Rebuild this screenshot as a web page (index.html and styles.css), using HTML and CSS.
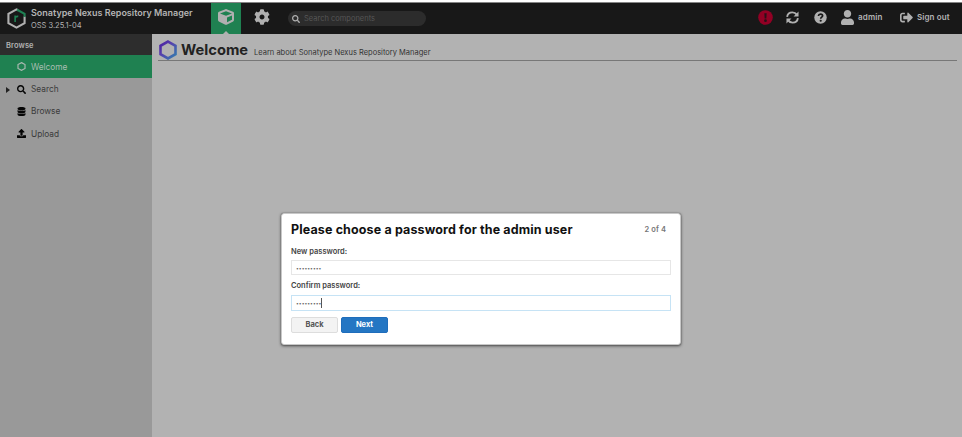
FILE: index.html
```html
<!DOCTYPE html>
<html lang="en">
<head>
<meta charset="utf-8">
<title>Sonatype Nexus Repository Manager</title>
<link rel="stylesheet" href="styles.css">
</head>
<body>
<header class="topbar">
  <div class="brand">
    <svg class="brand-logo" viewBox="0 0 18 20">
      <g fill="none" stroke-width="2">
        <path d="M10.500 2.100L9 1.300 1.300 5.600v8.800L9 18.700l7.700-4.300V8.200" stroke="#b0b0b0"/>
        <path d="M9.600 1.700l7.100 3.900v2.800" stroke="#1f8153"/>
        <path d="M7.700 13.400V7.200M7.700 10c.2-1.500 1.200-2.200 3-2" stroke="#1f8153" stroke-width="1.500"/>
      </g>
    </svg>
    <div class="brand-text">
      <div class="brand-name">Sonatype Nexus Repository Manager</div>
      <div class="brand-version">OSS 3.25.1-04</div>
    </div>
  </div>
  <div class="mode mode-active">
    <svg class="icon-cube" viewBox="0 0 512 512"><path d="M239.1 6.3l-208 78c-18.700 7-31.100 25-31.100 45v225.100c0 18.200 10.300 34.800 26.500 42.900l208 104c13.500 6.800 29.400 6.800 42.900 0l208-104c16.300-8.100 26.500-24.800 26.500-42.900V129.300c0-20-12.400-37.900-31.100-44.900l-208-78C262 2.200 250 2.200 239.100 6.300zM256 68.400l192 72v1.100l-192 78-192-78v-1.100l192-72zm32 356V275.500l160-65v133.900l-160 80z"/></svg>
  </div>
  <div class="mode mode-admin">
    <svg class="icon-cog" viewBox="0 0 512 512"><path d="M487.4 315.7l-42.6-24.6c4.3-23.2 4.3-47 0-70.2l42.6-24.6c4.9-2.8 7.1-8.6 5.5-14-11.1-35.6-30-67.8-54.7-94.6-3.8-4.1-10-5.1-14.8-2.3L380.8 110c-17.9-15.4-38.5-27.3-60.8-35.1V25.8c0-5.6-3.9-10.5-9.4-11.7-36.7-8.2-74.3-7.8-109.2 0-5.5 1.2-9.4 6.1-9.4 11.7V75c-22.2 7.9-42.8 19.8-60.8 35.1L88.7 85.5c-4.9-2.8-11-1.9-14.8 2.3-24.7 26.7-43.6 58.9-54.7 94.6-1.7 5.4.6 11.2 5.5 14L67.3 221c-4.3 23.2-4.3 47 0 70.2l-42.6 24.6c-4.9 2.8-7.1 8.6-5.5 14 11.1 35.6 30 67.8 54.7 94.6 3.8 4.1 10 5.1 14.8 2.3l42.6-24.6c17.9 15.4 38.5 27.3 60.8 35.1v49.2c0 5.6 3.9 10.5 9.4 11.7 36.7 8.2 74.3 7.8 109.2 0 5.5-1.2 9.4-6.1 9.4-11.7v-49.2c22.2-7.9 42.8-19.8 60.8-35.1l42.6 24.6c4.9 2.8 11 1.9 14.8-2.3 24.7-26.7 43.6-58.9 54.7-94.6 1.5-5.5-.7-11.3-5.6-14.1zM256 336c-44.100 0-80-35.900-80-80s35.900-80 80-80 80 35.900 80 80-35.900 80-80 80z"/></svg>
  </div>
  <div class="quick-search">
    <svg class="icon-find" viewBox="0 0 512 512"><path d="M505 442.7L405.3 343c-4.5-4.5-10.6-7-17-7H372c27.600-35.300 44-79.700 44-128C416 93.100 322.900 0 208 0S0 93.100 0 208s93.100 208 208 208c48.300 0 92.700-16.400 128-44v16.300c0 6.400 2.500 12.500 7 17l99.700 99.700c9.400 9.400 24.600 9.400 33.900 0l28.300-28.300c9.400-9.400 9.400-24.600.1-34zM208 336c-70.700 0-128-57.200-128-128 0-70.700 57.200-128 128-128 70.700 0 128 57.200 128 128 0 70.700-57.200 128-128 128z"/></svg>
    <span>Search components</span>
  </div>
  <div class="actions">
    <svg class="icon-alert" viewBox="0 0 14 14"><circle cx="7" cy="7" r="6.800"/><path d="M5.900 3h2.200l-.3 4.900H6.200z" fill="#2a1018"/><circle cx="7" cy="10" r="1.300" fill="#2a1018"/></svg>
    <svg class="icon-refresh" viewBox="0 0 14 14"><path d="M1.200 6.300C1.600 3.300 4 1.500 6.900 1.500c2 0 3.700.9 4.700 2.400M12.800 7.700c-.4 3-2.800 4.800-5.700 4.800-2 0-3.700-.9-4.700-2.400" fill="none" stroke="#b0b0b0" stroke-width="2"/><path d="M13.500.5v5.400H8.100zM.5 13.500V8.100h5.400z"/></svg>
    <svg class="icon-help" viewBox="0 0 14 14"><circle cx="7" cy="7" r="6.700"/><path d="M4.700 5.400C4.900 3.900 5.900 3.400 7 3.400c1.200 0 2.300.7 2.300 1.800C9.300 6.600 7.200 6.600 7.200 8.300" fill="none" stroke="#181818" stroke-width="1.800"/><circle cx="7.200" cy="10.500" r="1.200" fill="#181818"/></svg>
    <svg class="icon-user" viewBox="0 0 448 512"><path d="M224 256c70.700 0 128-57.300 128-128S294.700 0 224 0 96 57.300 96 128s57.300 128 128 128zm89.600 32h-16.700c-22.200 10.200-46.900 16-72.900 16s-50.600-5.800-72.900-16h-16.700C60.200 288 0 348.200 0 422.400V464c0 26.500 21.500 48 48 48h352c26.500 0 48-21.500 48-48v-41.600c0-74.200-60.200-134.400-134.400-134.400z"/></svg>
    <span class="user-name">admin</span>
    <svg class="icon-signout" viewBox="0 0 512 512"><path d="M497 273L329 441c-15 15-41 4.500-41-17v-96H152c-13.300 0-24-10.700-24-24v-96c0-13.300 10.700-24 24-24h136V88c0-21.400 25.900-32 41-17l168 168c9.300 9.400 9.300 24.600 0 34zM192 436v-40c0-6.600-5.400-12-12-12H96c-17.700 0-32-14.300-32-32V160c0-17.700 14.300-32 32-32h84c6.600 0 12-5.400 12-12V76c0-6.600-5.400-12-12-12H96c-53 0-96 43-96 96v192c0 53 43 96 96 96h84c6.600 0 12-5.400 12-12z"/></svg>
    <span class="sign-out">Sign out</span>
  </div>
</header>
<div class="workspace">
  <nav class="sidebar">
    <div class="sidebar-title">Browse</div>
    <div class="nav-item nav-selected">
      <svg viewBox="0 0 10 10"><path d="M5 .7l3.900 2.150v4.300L5 9.300 1.100 7.150v-4.300z" fill="none" stroke="#a9b8b0" stroke-width="1.300"/></svg>
      <span>Welcome</span>
    </div>
    <div class="nav-item nav-parent">
      <svg viewBox="0 0 512 512"><path d="M505 442.700L405.300 343c-4.500-4.500-10.600-7-17-7H372c27.600-35.300 44-79.700 44-128C416 93.100 322.900 0 208 0S0 93.100 0 208s93.100 208 208 208c48.300 0 92.700-16.400 128-44v16.300c0 6.400 2.500 12.500 7 17l99.700 99.700c9.400 9.400 24.600 9.400 33.900 0l28.300-28.300c9.400-9.400 9.400-24.600.1-34zM208 336c-70.700 0-128-57.200-128-128 0-70.700 57.200-128 128-128 70.700 0 128 57.200 128 128 0 70.700-57.200 128-128 128z"/></svg>
      <span>Search</span>
    </div>
    <div class="nav-item">
      <svg viewBox="0 0 448 512"><path d="M448 73.143v45.714C448 159.143 347.667 192 224 192S0 159.143 0 118.857V73.143C0 32.857 100.333 0 224 0s224 32.857 224 73.143zM448 176v102.857C448 319.143 347.667 352 224 352S0 319.143 0 278.857V176c48.125 33.143 136.208 48.572 224 48.572S399.874 209.143 448 176zm0 160v102.857C448 479.143 347.667 512 224 512S0 479.143 0 438.857V336c48.125 33.143 136.208 48.572 224 48.572S399.874 369.143 448 336z"/></svg>
      <span>Browse</span>
    </div>
    <div class="nav-item">
      <svg viewBox="0 0 512 512"><path d="M296 384h-80c-13.300 0-24-10.700-24-24V192h-87.700c-17.800 0-26.700-21.500-14.100-34.100L242.300 5.700c7.500-7.500 19.800-7.500 27.300 0l152.200 152.200c12.600 12.600 3.700 34.100-14.100 34.100H320v168c0 13.300-10.700 24-24 24zm216-8v112c0 13.300-10.700 24-24 24H24c-13.300 0-24-10.700-24-24V376c0-13.300 10.700-24 24-24h136v8c0 30.900 25.100 56 56 56h80c30.900 0 56-25.100 56-56v-8h136c13.300 0 24 10.700 24 24z"/></svg>
      <span>Upload</span>
    </div>
  </nav>
  <main class="content">
    <div class="page-head">
      <svg class="page-logo" viewBox="0 0 20 20">
        <defs><linearGradient id="hex" x1="0" y1="0" x2="1" y2="1"><stop offset="0" stop-color="#4b20a0"/><stop offset=".4" stop-color="#5640ad"/><stop offset="1" stop-color="#337fae"/></linearGradient></defs>
        <path d="M10 1.600l7.500 4.200v8.400L10 18.400l-7.500-4.200V5.800z" fill="none" stroke="url(#hex)" stroke-width="2.600"/>
      </svg>
      <h1>Welcome</h1>
      <span class="page-note">Learn about Sonatype Nexus Repository Manager</span>
    </div>
  </main>
</div>
<section class="dialog">
  <div class="dialog-head">
    <h2>Please choose a password for the admin user</h2>
    <span class="step">2 of 4</span>
  </div>
  <div class="label label-new">New password:</div>
  <div class="field"><span class="dots">•••••••••</span></div>
  <div class="label label-confirm">Confirm password:</div>
  <div class="field field-focus"><span class="dots">•••••••••</span><span class="caret"></span></div>
  <div class="buttons">
    <div class="button">Back</div>
    <div class="button button-primary">Next</div>
  </div>
</section>
</body>
</html>
```
FILE: styles.css
```css
* { box-sizing: border-box; }
body {
  margin: 0;
  height: 437px;
  overflow: hidden;
  display: flex;
  flex-direction: column;
  background: #fff;
  font-family: Inter, "Open Sans", sans-serif;
  font-size: 8px;
  white-space: nowrap;
}
svg { display: block; flex: none; fill: #b0b0b0; }

.topbar {
  display: flex;
  align-items: center;
  height: 32px;
  margin-top: 2px;
  flex: none;
  background: #181818;
  border-top: 1px solid #858585;
  color: #b4b4b4;
}
.brand { display: flex; align-items: center; width: 211px; height: 31px; padding-left: 7px; }
.brand-logo { width: 19px; height: 21px; margin: -1px 5px 0 0; }
.brand-text { padding-top: 1px; }
.brand-name { font-size: 9px; font-weight: 600; line-height: 12px; }
.brand-version { font-size: 7.500px; line-height: 13px; letter-spacing: 0; }
.mode { display: flex; align-items: center; justify-content: center; width: 30px; height: 31px; }
.mode-active { position: relative; background: #1f8151; }
.mode-active::after {
  content: "";
  position: absolute;
  left: 12px;
  bottom: 0;
  border: 3px solid transparent;
  border-top: 0;
  border-bottom-color: #b0b0b0;
}
.mode-admin { margin-left: 6px; }
.icon-cube { width: 16px; height: 16px; margin-top: -3px; }
.icon-cog { width: 16px; height: 16px; margin-top: -3px; margin-right: 1px; }
.quick-search {
  display: flex;
  align-items: center;
  width: 138px;
  height: 15px;
  margin-left: 11px;
  padding-left: 4px;
  border-radius: 8px;
  background: #2c2c2c;
  color: #565656;
  font-size: 7.500px;
}
.icon-find { width: 8px; height: 8px; margin-right: 4px; }
.actions {
  display: flex;
  align-items: center;
  margin-left: auto;
  padding: 0 12px 3px 0;
  font-weight: 600;
}
.icon-alert { width: 15px; height: 15px; margin-right: 13px; fill: #920024; }
.icon-refresh { width: 13px; height: 13px; margin-right: 15px; }
.icon-help { width: 13px; height: 13px; margin-right: 14px; }
.icon-user { width: 13px; height: 15px; margin-right: 4px; }
.user-name { width: 42px; letter-spacing: 0.15px; }
.icon-signout { width: 13px; height: 13px; margin-right: 4px; }
.sign-out { width: 33px; letter-spacing: 0.100px; }

.workspace { display: flex; flex: 1; }
.sidebar { width: 152px; background: #999; flex: none; }
.sidebar-title {
  height: 21px;
  padding-left: 6px;
  line-height: 23px;
  background: #2d2d2d;
  color: #b2b2b2;
  font-size: 7.500px;
  font-weight: 600;
  letter-spacing: 0.1px;
}
.nav-item {
  position: relative;
  display: flex;
  align-items: center;
  height: 22.300px;
  padding-left: 17px;
  color: #3b3b3b;
  font-size: 8.300px;
}
.nav-item svg { width: 9px; height: 9px; margin-right: 5px; fill: #050505; }
.nav-selected { height: 23px; background: #1f8151; color: #a9bdb2; }
.nav-parent::before {
  content: "";
  position: absolute;
  left: 6px;
  top: 9px;
  border: 3px solid transparent;
  border-left: 4px solid #222;
  border-right: 0;
}
.content { flex: 1; padding: 3px 5px 0 6px; background: #b2b2b2; }
.page-head { display: flex; align-items: center; height: 24px; border-bottom: 1px solid #777; }
.page-logo { width: 20px; height: 20px; margin: 2px 3px 0 0; }
h1 { margin: 2px 4px 0 0; width: 69px; color: #222; font-size: 14.700px; line-height: 20px; font-weight: 700; }
.page-note { padding-top: 7px; color: #333; font-size: 7.500px; }

.dialog {
  position: absolute;
  left: 281px;
  top: 213px;
  width: 400px;
  height: 132px;
  padding: 8px 9px 0;
  border: 1px solid #c8c8c8;
  border-radius: 3px;
  background: #fff;
  box-shadow: 0 1px 3px #444, 0 0 1px #555;
}
.dialog-head { display: flex; justify-content: space-between; align-items: center; height: 15px; padding-right: 5px; }
h2 { margin: 0; color: #111; font-size: 12.500px; font-weight: 700; letter-spacing: 0.130px; }
.step { color: #777; font-size: 7.500px; font-weight: 600; letter-spacing: 0.1px; }
.label { height: 10px; line-height: 10px; color: #444; font-size: 7.500px; font-weight: 600; }
.label-new { margin-top: 10px; }
.label-confirm { margin-top: 6px; }
.field {
  display: flex;
  align-items: center;
  height: 15px;
  margin-top: 3px;
  padding-left: 4px;
  border: 1px solid #e6e6e6;
  background: #fff;
}
.field-focus { height: 16px; margin-top: 4px; border-color: #c6e3f5; }
.dots { color: #666; font-size: 5px; }
.caret { width: 1px; height: 10px; background: #555; }
.buttons { display: flex; gap: 3px; margin-top: 6px; }
.button {
  width: 47px;
  height: 16px;
  border: 1px solid #ddd;
  border-radius: 2px;
  background: #f3f3f3;
  color: #555;
  text-align: center;
  line-height: 14px;
  font-size: 7.500px;
  font-weight: 700;
}
.button-primary { border-color: #1f6dbb; background: #2476c3; color: #fff; }
```
